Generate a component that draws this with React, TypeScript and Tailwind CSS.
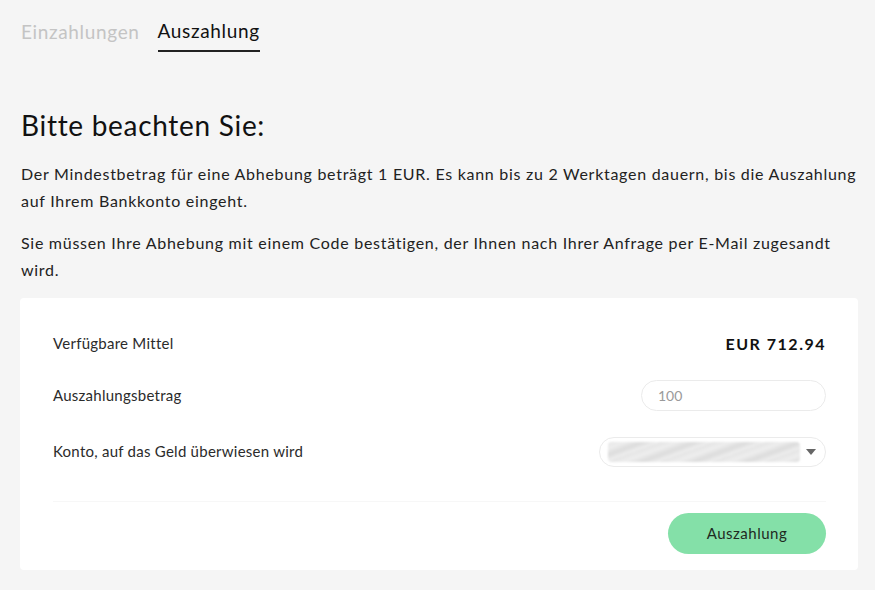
import { useState } from 'react';

const font = "font-['Lato','Open_Sans',sans-serif]";

function Row({ label, children }: { label: string; children: React.ReactNode }) {
  return (
    <div className="flex items-center justify-between h-[30px]">
      <span className="text-[15px] tracking-[0.25px] text-[#2b2b2b]">{label}</span>
      {children}
    </div>
  );
}

export default function App() {
  const [amount, setAmount] = useState('');

  return (
    <div className={`min-h-[590px] bg-[#f5f5f5] pl-5 pr-[17px] ${font}`}>
      <div className="flex gap-[18px] pt-[17px] pl-px">
        <button className="text-[19px] tracking-[0.65px] text-[#c4c4c4] pb-[4px]">Einzahlungen</button>
        <button className="text-[19px] tracking-[0.65px] text-[#111] pb-[4px] border-b-2 border-[#222]">
          Auszahlung
        </button>
      </div>

      <h2 className="mt-[58px] text-[28px] tracking-[0.7px] text-[#111] leading-[30px] pl-px">Bitte beachten Sie:</h2>

      <div className="mt-[20px] -mr-px text-[16px] tracking-[0.72px] leading-[27px] text-[#222] space-y-[15px] pl-px">
        <p>
          Der Mindestbetrag für eine Abhebung beträgt 1 EUR. Es kann bis zu 2 Werktagen dauern, bis die Auszahlung
          auf Ihrem Bankkonto eingeht.
        </p>
        <p>
          Sie müssen Ihre Abhebung mit einem Code bestätigen, der Ihnen nach Ihrer Anfrage per E-Mail zugesandt
          wird.
        </p>
      </div>

      <div className="mt-[15px] bg-white rounded-[4px] pl-[33px] pr-[32px] pt-[31px] pb-[16px]">
        <Row label="Verfügbare Mittel">
          <span className="text-[16px] font-bold tracking-[1.5px] text-[#111]">EUR 712.94</span>
        </Row>
        <div className="mt-[22px]">
          <Row label="Auszahlungsbetrag">
            <input
              value={amount}
              onChange={(e) => setAmount(e.target.value)}
              placeholder="100"
              className="w-[185px] h-[31px] rounded-full border border-[#ebebeb] px-4 text-[14px] text-[#333] placeholder:text-[#9a9a9a] outline-none"
            />
          </Row>
        </div>
        <div className="mt-[26px]">
          <Row label="Konto, auf das Geld überwiesen wird">
            <div className="w-[227px] h-[30px] rounded-full border border-[#ebebeb] flex items-center pl-[8px] pr-[9px]">
              <div className="flex-1 h-[20px] rounded-sm bg-[repeating-linear-gradient(160deg,#e4e4e4_0px,#eeeeee_6px,#dcdcdc_12px,#f0f0f0_18px)] blur-[1px]" />
              <svg width="10" height="6" viewBox="0 0 10 6" className="ml-[6px]">
                <path d="M0 0 L10 0 L5 6 Z" fill="#666" />
              </svg>
            </div>
          </Row>
        </div>

        <div className="mt-[34px] h-px bg-[#f7f7f7]" />

        <div className="flex justify-end mt-[11px]">
          <button className="w-[158px] h-[41px] rounded-full bg-[#84e0a8] text-[15px] tracking-[0.5px] text-[#1e2a22]">
            Auszahlung
          </button>
        </div>
      </div>
    </div>
  );
}
